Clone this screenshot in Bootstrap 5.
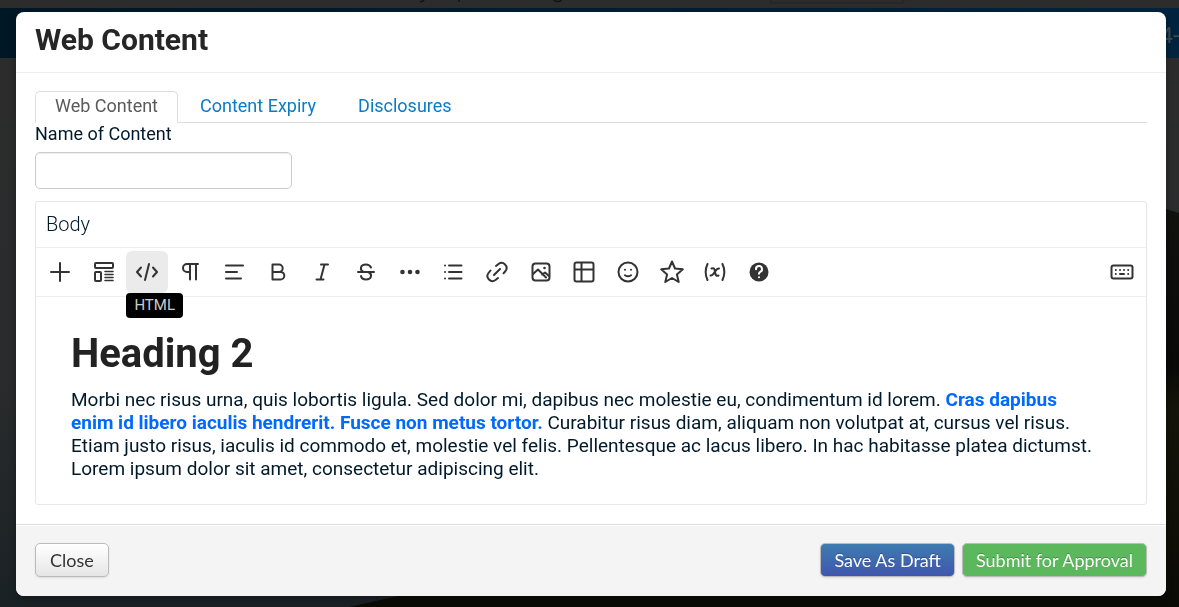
<!DOCTYPE html>
<html lang="en">
<head>
<meta charset="utf-8">
<meta name="viewport" content="width=device-width, initial-scale=1">
<title>Web Content</title>
<link href="https://cdn.jsdelivr.net/npm/bootstrap@5.3.0/dist/css/bootstrap.min.css" rel="stylesheet">
<style>
body { font-family: Roboto, "Liberation Sans", sans-serif; font-size: 18px; line-height: 23px; color: #001a2b; background: #0b0b07; }
/* dimmed page behind the dialog */
.backpage { height: 100vh; overflow: hidden; }
.page-strip { height: 8px; background: #2c2c2c; flex: none; }
.page-strip svg { display: block; }
.page-bar { height: 50px; flex: none; background: linear-gradient(90deg, #001726, #002138 70%, #00243f); color: #3f4951; font-size: 22px; }
.scene { flex: 1; min-height: 0; background: linear-gradient(#2c2c2c, #292b2c 60%, #1a2125); }
.scene svg { display: block; width: 100%; height: 100%; }
/* dialog */
.modal-dialog { max-width: none; margin: 12px 13px 11px 16px; }
.modal-content { border: 0; border-radius: 8px; overflow: hidden; color: inherit; box-shadow: 0 3px 7px rgba(0,0,0,.3); }
.modal-header { padding: 10px 19px 14px; border-bottom: 1px solid #eee; }
.modal-title { font-size: 30px; line-height: 36px; font-weight: 700; color: #262626; }
.modal-body { padding: 18px 19px 19px; }
.nav-tabs { border-color: #ddd; }
.nav-tabs .nav-link { padding: 3px 19px 5px; margin-right: 2px; color: #0a7cc4; border-radius: 5px 5px 0 0; line-height: 22px; }
.nav-tabs .nav-link.active { color: #5a5a5a; border-color: #ddd #ddd #fff; }
.name-label { line-height: 21px; }
.name-input { width: 257px; height: 37px; border: 1px solid #ccc; border-radius: 5px; box-shadow: inset 0 1px 1px rgba(0,0,0,.075); margin: 8px 0 12px; }
.editor { border: 1px solid #e6e6e6; border-radius: 3px; }
.editor-label { padding: 11px 10px; font-size: 20px; font-weight: 300; border-bottom: 1px solid #eee; }
.toolbar { padding: 3px 3px 3px; border-bottom: 1px solid #eee; }
.tool-list { flex: 0 1 741px; }
.tool { width: 42px; height: 42px; padding: 0; border: 0; border-radius: 6px; background: transparent; color: #333; position: relative; }
.tool.on { background: #ebebeb; }
.tool svg { width: 24px; height: 24px; display: block; margin: auto; fill: none; stroke: currentColor; stroke-width: 2; stroke-linecap: round; stroke-linejoin: round; }
.tip { position: absolute; top: 100%; left: 0; background: #000; color: #ccc; font-size: 15px; line-height: 25px; padding: 0 8px; border-radius: 4px; }
.document { padding: 34px 48px 24px 35px; font-size: 19px; }
.document h2 { font-size: 40px; line-height: 46px; font-weight: 700; color: #222; margin: 0 0 11px; }
.document strong { color: #0069ff; }
.modal-footer { padding: 18px 19px 19px; border-top: 1px solid #ddd; background: #f4f4f4; box-shadow: inset 0 1px 0 #fff; border-radius: 0; }
.modal-footer > * { margin: 0; }
.act { font-family: Lato, sans-serif; font-size: 18px; line-height: 24px; padding: 4px 14px; border: 1px solid #bbb; border-radius: 5px; box-shadow: 0 1px 2px rgba(0,0,0,.1); }
.act-close { color: #333; background: linear-gradient(#fff, #e6e6e6); }
.act-draft { color: #fff; background: linear-gradient(#3d7cb0, #4156ae); }
.act-submit { color: #fff; background: #5cb85c; }
.act-draft, .act-submit { text-shadow: 0 -1px 0 rgba(0,0,0,.25); padding: 4px 13px; }
.act-group { gap: 7px; }
</style>
</head>
<body>
<div class="backpage d-flex flex-column" aria-hidden="true">
  <div class="page-strip">
    <svg width="920" height="8" fill="none" stroke="#111" stroke-width="1.5"><path d="M424 0q-1 2-4 1.500M459 0v2M554 0q1 2 4 1.500q3 0 3-1.500"/><path d="M770 0v1q0 2 3 2h128q3 0 3-2V0" stroke="#222" stroke-width="1"/></svg>
  </div>
  <div class="page-bar d-flex align-items-center justify-content-end pt-1"><span>4-</span></div>
  <div class="scene">
    <svg viewBox="0 0 1179 549" preserveAspectRatio="none">
      <defs><linearGradient id="hill" x2="0" y2="1"><stop offset="0" stop-color="#11110e"/><stop offset=".4" stop-color="#090908"/><stop offset=".5" stop-color="#15140a"/><stop offset="1" stop-color="#0b0b06"/></linearGradient></defs>
      <path d="M350 549Q420 532 600 500L1166 151L1179 155V549Z" fill="url(#hill)"/>
    </svg>
  </div>
</div>

<div class="modal d-block" role="dialog" aria-labelledby="dialogTitle">
  <div class="modal-dialog">
    <div class="modal-content">
      <div class="modal-header"><h1 class="modal-title" id="dialogTitle">Web Content</h1></div>
      <div class="modal-body">
        <ul class="nav nav-tabs">
          <li class="nav-item"><a class="nav-link active" href="#web" aria-current="page">Web Content</a></li>
          <li class="nav-item"><a class="nav-link" href="#expiry">Content Expiry</a></li>
          <li class="nav-item"><a class="nav-link" href="#disclosures">Disclosures</a></li>
        </ul>
        <label class="name-label d-block" for="contentName">Name of Content</label>
        <input class="name-input form-control" id="contentName" type="text">
        <div class="editor">
          <div class="editor-label">Body</div>
          <div class="toolbar d-flex justify-content-between" role="toolbar" aria-label="Editor tools">
            <div class="tool-list d-flex justify-content-between">
              <button class="tool" type="button" aria-label="Insert"><svg viewBox="0 0 24 24"><path d="M3 12h18M12 3v18"/></svg></button>
              <button class="tool" type="button" aria-label="Layouts"><svg viewBox="0 0 24 24"><rect x="3" y="3" width="18" height="5" rx="1"/><rect x="3" y="12" width="6" height="9" rx="1"/><path d="M13 11.500h8M13 14.500h8M13 17.500h8M13 20.500h8" stroke-width="1.6"/></svg></button>
              <button class="tool on" type="button" aria-label="HTML"><svg viewBox="0 0 24 24"><path d="M6 7.500L2 12l4 4.500M18 7.500L22 12l-4 4.500M14 4l-4 16"/></svg><span class="tip">HTML</span></button>
              <button class="tool" type="button" aria-label="Paragraph"><svg viewBox="0 0 24 24"><path d="M19 4H8a4 4 0 0 0 0 8h3M11 4v15.500M17 4v15.500"/></svg></button>
              <button class="tool" type="button" aria-label="Align"><svg viewBox="0 0 24 24"><path d="M3 5.500h17M3 12h11M3 18.500h15"/></svg></button>
              <button class="tool" type="button" aria-label="Bold"><svg viewBox="0 0 24 24"><path d="M6.500 4.500v15h8a3.800 3.800 0 0 0 0-7.600h-8M6.500 4.500H13a3.600 3.600 0 0 1 0 7.400"/></svg></button>
              <button class="tool" type="button" aria-label="Italic"><svg viewBox="0 0 24 24"><path d="M11 4.500h7M6.500 19.500h7M14.500 4.500l-4 15"/></svg></button>
              <button class="tool" type="button" aria-label="Strikethrough"><svg viewBox="0 0 24 24"><path d="M4 12h16M17 7.500C16 5.500 14.500 4.500 12 4.500C6 4.500 5.500 10 9.500 12H14c5 2 3.500 7.500-2 7.500c-2.500 0-4.500-1-5-3.500"/></svg></button>
              <button class="tool" type="button" aria-label="More"><svg viewBox="0 0 24 24"><g fill="currentColor" stroke="none"><circle cx="4.500" cy="12" r="2.300"/><circle cx="12" cy="12" r="2.300"/><circle cx="19.500" cy="12" r="2.300"/></g></svg></button>
              <button class="tool" type="button" aria-label="List"><svg viewBox="0 0 24 24"><path d="M8 5.500h12.500M8 12h12.500M8 18.500h12.500M4 5.500h.01M4 12h.01M4 18.500h.01"/></svg></button>
              <button class="tool" type="button" aria-label="Link"><svg viewBox="0 0 24 24"><path d="M9 15l6-6M11 6l2.500-2a5 5 0 0 1 7 7l-2 2.300M5.500 10.500l-2 2.500a5 5 0 0 0 7 7l2.500-2"/></svg></button>
              <button class="tool" type="button" aria-label="Image"><svg viewBox="0 0 24 24"><rect x="3.500" y="3.500" width="17" height="17" rx="3"/><path d="M4 14l5-4.500 8 8M13 14.500l3-2 4 3.500"/><circle cx="15.500" cy="8" r="1.300" fill="currentColor" stroke="none"/></svg></button>
              <button class="tool" type="button" aria-label="Table"><svg viewBox="0 0 24 24"><rect x="2.500" y="2.500" width="19" height="19" rx="2"/><path d="M3 9.500h18M9.500 3v18"/></svg></button>
              <button class="tool" type="button" aria-label="Emoji"><svg viewBox="0 0 24 24"><circle cx="12" cy="12" r="9.500"/><path d="M9 15.200q3 2.200 6 0"/><path d="M9 9.700h.01M15 9.700h.01"/></svg></button>
              <button class="tool" type="button" aria-label="Favourite"><svg viewBox="0 0 24 24"><path d="M12 1.500l3 7 7.800.8-5.900 5.100L18.700 22 12 18 5.300 22l1.800-7.600L1.200 9.300 9 8.500z"/></svg></button>
              <button class="tool" type="button" aria-label="Variables"><svg viewBox="0 0 24 24"><path d="M4.500 4Q.8 12 4.500 20M19.500 4q3.700 8 0 16M8.500 8.500c3-1 3 .5 3.500 3.500s1.500 4.500 3.500 3.500M16 8.500c-4-.5-4.500 7.500-8.500 7"/></svg></button>
              <button class="tool" type="button" aria-label="Help"><svg viewBox="0 0 24 24"><circle cx="12" cy="12" r="9.500" fill="currentColor" stroke="none"/><path d="M9 9.200a3 3 0 1 1 4.200 2.600q-1.200.6-1.200 2M12 17.200h.01" stroke="#fff"/></svg></button>
            </div>
            <button class="tool" type="button" aria-label="Keyboard shortcuts"><svg viewBox="0 0 24 24"><rect x="1.500" y="5.500" width="21" height="13" rx="2"/><path d="M5.800 10h.01M10 10h.01M14 10h.01M18.200 10h.01M5.800 14h.01M10 14h4M18.200 14h.01"/></svg></button>
          </div>
          <div class="document">
            <h2>Heading 2</h2>
            <p class="mb-0">Morbi nec risus urna, quis lobortis ligula. Sed dolor mi, dapibus nec molestie eu, condimentum id lorem. <strong>Cras dapibus enim id libero iaculis hendrerit. Fusce non metus tortor.</strong> Curabitur risus diam, aliquam non volutpat at, cursus vel risus. Etiam justo risus, iaculis id commodo et, molestie vel felis. Pellentesque ac lacus libero. In hac habitasse platea dictumst. Lorem ipsum dolor sit amet, consectetur adipiscing elit.</p>
          </div>
        </div>
      </div>
      <div class="modal-footer justify-content-between">
        <button class="act act-close" type="button">Close</button>
        <div class="act-group d-flex">
          <button class="act act-draft" type="button">Save As Draft</button>
          <button class="act act-submit" type="button">Submit for Approval</button>
        </div>
      </div>
    </div>
  </div>
</div>
<script src="https://cdn.jsdelivr.net/npm/bootstrap@5.3.0/dist/js/bootstrap.bundle.min.js"></script>
</body>
</html>
